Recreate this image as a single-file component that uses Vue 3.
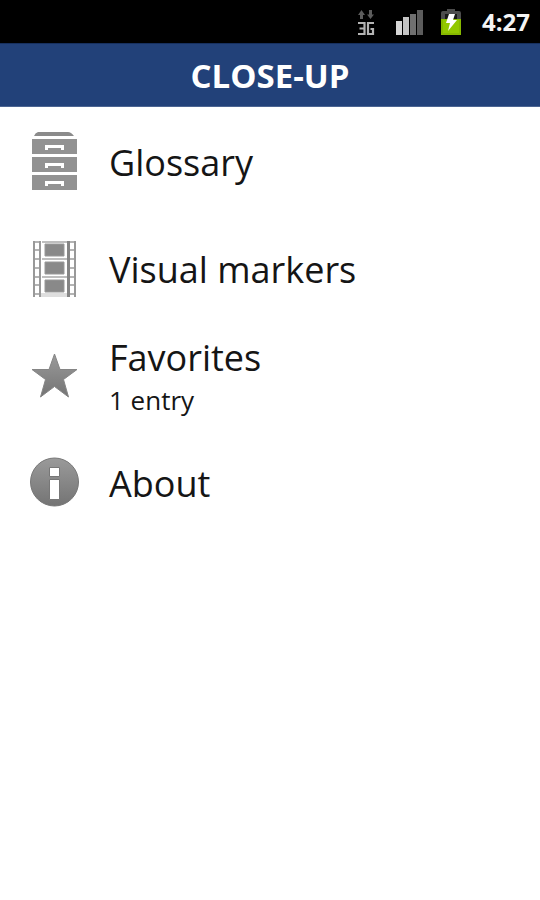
<script setup>
const items = [
  { id: 'glossary', label: 'Glossary' },
  { id: 'markers', label: 'Visual markers' },
  { id: 'favorites', label: 'Favorites', note: '1 entry' },
  { id: 'about', label: 'About' },
]
</script>

<template>
  <div class="screen">
    <div class="status">
      <svg class="network" width="20" height="28" viewBox="0 0 20 28" aria-label="3G">
        <path d="M5.500 2 9 7H7V11H4V7H2Z M14.500 11 11 6.500H13V2H16V6.500H18Z" fill="#5c5c5c" />
        <path d="M2 15H8.500V26H2M3.500 20.500H8M18 15H12V26H17V21H14.500" fill="none" stroke="#b4b4b4" stroke-width="2.200" />
      </svg>
      <svg class="signal" width="28" height="26" viewBox="0 0 28 26" aria-label="Signal">
        <path d="M0 12H6V26H0Z" fill="#d6d6d6" />
        <path d="M7 8H13V26H7Z" fill="#c4c4c4" />
        <path d="M14 5H20V26H14Z" fill="#707070" />
        <path d="M21 1H27V26H21Z" fill="#5c5c5c" />
      </svg>
      <svg class="battery" width="22" height="28" viewBox="0 0 22 28" aria-label="Battery charging">
        <path d="M7 1H15V3H19Q21 3 21 5V27H1V5Q1 3 3 3H7Z" fill="#4c4c4c" />
        <path d="M5 6H17V12H5Z" fill="#161616" />
        <path d="M1 11H21V27H1Z" fill="#86b800" />
        <path d="M3 12H19V25H3Z" fill="#92c800" />
        <path d="M9 6H15L13 12H17L8 23 10 15H6Z" fill="#fff" />
      </svg>
      <time class="clock">4:27</time>
    </div>

    <header class="bar">
      <h1>CLOSE-UP</h1>
    </header>

    <nav class="menu">
      <a v-for="item in items" :key="item.id" class="row" :href="'#' + item.id">
        <svg class="icon" viewBox="0 0 50 60" aria-hidden="true">
          <defs>
            <linearGradient id="shade" x1="0" y1="0" x2="0" y2="1">
              <stop offset="0" stop-color="#9a9a9a" />
              <stop offset="1" stop-color="#747474" />
            </linearGradient>
          </defs>
          <g v-if="item.id === 'glossary'">
            <path d="M8 0H38Q41 0 44 4H4Q5 1 8 0Z" fill="#8b8b8b" />
            <path d="M2 7H47V22H2ZM2 25H47V40H2ZM2 43H47V58H2Z" fill="#929292" />
            <path d="M16.500 18V14.500H32.500V18M16.500 36V32.500H32.500V36M16.500 54V50.500H32.500V54" fill="none" stroke="#fff" stroke-width="3" />
          </g>
          <g v-else-if="item.id === 'markers'">
            <path d="M11 54H37V58H11Z" fill="#dedede" />
            <path d="M3 3H11M3 11H11M3 20H11M3 29H11M3 38H11M3 46H11M3 55H11M38 3H46M38 11H46M38 20H46M38 29H46M38 38H46M38 46H46M38 55H46" stroke="#b4b4b4" stroke-width="2" />
            <path d="M12 3H37M12 20H37M12 38H37" stroke="#bebebe" stroke-width="2" />
            <path d="M4 2V58M10 2V58M45 2V58" stroke="#999" stroke-width="2" />
            <path d="M38.500 2V58" stroke="#858585" stroke-width="3" />
            <path d="M15 5H34V17H15ZM15 23H34V35H15ZM15 41H34V53H15Z" fill="#898989" stroke="#999" />
          </g>
          <path v-else-if="item.id === 'favorites'" d="M24.500 8 30 23.500H47L33.500 33.500 38.500 51 24.500 40.500 10.500 51 15.500 33.500 2 23.500H19Z" fill="url(#shade)" stroke="#858585" />
          <g v-else>
            <circle cx="24.500" cy="29" r="24" fill="url(#shade)" stroke="#777" />
            <path d="M19.500 14.500H29.500V23.500H19.500ZM19.500 26.500H29.500V46.500H19.500Z" fill="#fff" stroke="#777" />
          </g>
        </svg>
        <span class="text">
          <span class="label">{{ item.label }}</span>
          <span v-if="item.note" class="note">{{ item.note }}</span>
        </span>
      </a>
    </nav>
  </div>
</template>

<style>
body {
  margin: 0;
  background: #fff;
}
</style>

<style scoped>
.screen {
  min-height: 100vh;
  background: #fff;
  color: #151515;
  font-family: "Open Sans", "Noto Sans", sans-serif;
}
.status {
  display: flex;
  align-items: center;
  justify-content: flex-end;
  height: 43px;
  padding-right: 10px;
  background: #000;
}
.network {
  margin-right: 20px;
}
.signal {
  margin-right: 16px;
}
.battery {
  margin-right: 20px;
}
.clock {
  color: #f4f4f4;
  font-size: 24px;
  line-height: 32px;
  font-weight: 700;
}
.bar {
  display: flex;
  align-items: center;
  justify-content: center;
  box-sizing: border-box;
  height: 64px;
  border-top: 1px solid #17305f;
  border-bottom: 1px solid #4c6592;
  background: #224179;
}
.bar h1 {
  margin: 0;
  padding-top: 1px;
  color: #fff;
  font-size: 33px;
  line-height: 40px;
  font-weight: 700;
}
.menu {
  display: flex;
  flex-direction: column;
  padding-top: 1px;
}
.row {
  display: flex;
  align-items: center;
  gap: 29px;
  height: 107px;
  padding: 0 30px;
  color: inherit;
  text-decoration: none;
}
.icon {
  flex: none;
  width: 50px;
  height: 60px;
}
.text {
  display: flex;
  flex-direction: column;
}
.label {
  padding-top: 2px;
  font-size: 36px;
  line-height: 48px;
}
.note {
  padding-bottom: 2px;
  font-size: 26px;
  line-height: 36px;
}
</style>
